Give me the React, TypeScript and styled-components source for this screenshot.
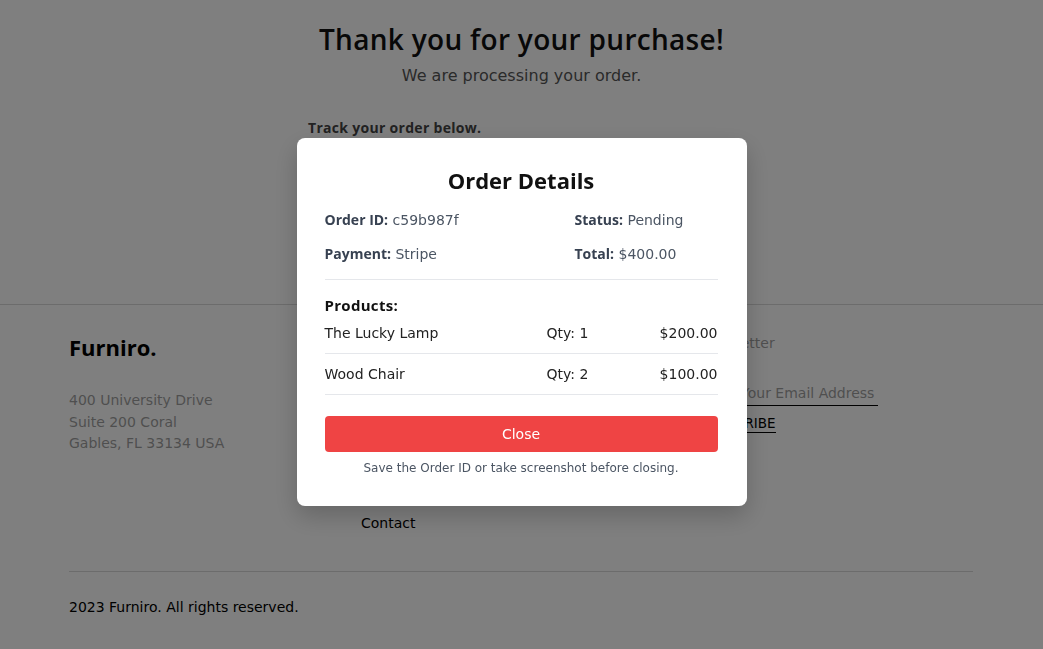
import React from "react";
import styled, { createGlobalStyle } from "styled-components";

const bodyFont = `"DejaVu Sans", "Open Sans", sans-serif`;
const headFont = `"Open Sans", "DejaVu Sans", sans-serif`;

const GlobalStyle = createGlobalStyle`
  * { box-sizing: border-box; }
  body {
    margin: 0;
    background: #ffffff;
    font-family: ${bodyFont};
    color: #000;
  }
`;

interface IProduct {
  name: string;
  qty: number;
  price: string;
}

const products: IProduct[] = [
  { name: "The Lucky Lamp", qty: 1, price: "$200.00" },
  { name: "Wood Chair", qty: 2, price: "$100.00" },
];

const footerLinks = ["Home", "Shop", "About", "Contact"];
const helpLinks = ["Payment Options", "Returns", "Privacy Policies"];

const App: React.FC = () => {
  return (
    <>
      <GlobalStyle />
      <STDPage>
        <STDMain>
          <STDTitle>Thank you for your purchase!</STDTitle>
          <STDSubtitle>We are processing your order.</STDSubtitle>
          <STDTrack>
            <STDTrackLabel>Track your order below.</STDTrackLabel>
            <STDTrackInput placeholder="Enter your Order ID" />
            <STDTrackButton>Track Order</STDTrackButton>
          </STDTrack>
        </STDMain>

        <STDFooter>
          <STDFooterTop>
            <STDBrandCol>
              <STDBrand>Furniro.</STDBrand>
              <STDAddress>
                400 University Drive
                <br />
                Suite 200 Coral
                <br />
                Gables, FL 33134 USA
              </STDAddress>
            </STDBrandCol>
            <STDLinkCol width={170}>
              <STDColTitle>Links</STDColTitle>
              {footerLinks.map((l) => (
                <STDFooterLink key={l}>{l}</STDFooterLink>
              ))}
            </STDLinkCol>
            <STDLinkCol width={168}>
              <STDColTitle>Help</STDColTitle>
              {helpLinks.map((l) => (
                <STDFooterLink key={l}>{l}</STDFooterLink>
              ))}
            </STDLinkCol>
            <STDNewsCol>
              <STDColTitle>Newsletter</STDColTitle>
              <STDEmail placeholder="Enter Your Email Address" />
              <STDSubscribe>SUBSCRIBE</STDSubscribe>
            </STDNewsCol>
          </STDFooterTop>
          <STDFooterBottom>2023 Furniro. All rights reserved.</STDFooterBottom>
        </STDFooter>
      </STDPage>

      <STDOverlay>
        <STDModal>
          <STDModalTitle>Order Details</STDModalTitle>
          <STDInfoGrid>
            <STDInfo>
              <b>Order ID:</b> c59b987f
            </STDInfo>
            <STDInfo>
              <b>Status:</b> Pending
            </STDInfo>
            <STDInfo>
              <b>Payment:</b> Stripe
            </STDInfo>
            <STDInfo>
              <b>Total:</b> $400.00
            </STDInfo>
          </STDInfoGrid>
          <STDProductsTitle>Products:</STDProductsTitle>
          {products.map((p) => (
            <STDProductRow key={p.name}>
              <span>{p.name}</span>
              <STDQty>Qty: {p.qty}</STDQty>
              <STDPrice>{p.price}</STDPrice>
            </STDProductRow>
          ))}
          <STDCloseButton>Close</STDCloseButton>
          <STDNote>Save the Order ID or take screenshot before closing.</STDNote>
        </STDModal>
      </STDOverlay>
    </>
  );
};

export default App;

const STDPage = styled.div`
  display: flex;
  flex-direction: column;
`;

const STDMain = styled.main`
  padding: 22px 0 70px;
  display: flex;
  flex-direction: column;
  align-items: center;
`;

const STDTitle = styled.h1`
  margin: 0;
  font-family: ${headFont};
  font-size: 28px;
  line-height: 34px;
  font-weight: 600;
  letter-spacing: 0.3px;
  color: #111;
`;

const STDSubtitle = styled.p`
  margin: 8px 0 0;
  font-size: 16px;
  line-height: 24px;
  color: #555;
`;

const STDTrack = styled.div`
  width: 427px;
  margin-top: 30px;
  display: flex;
  flex-direction: column;
  gap: 8px;
`;

const STDTrackLabel = styled.div`
  font-family: ${headFont};
  font-size: 14px;
  line-height: 20px;
  font-weight: 700;
  letter-spacing: 0.3px;
  color: #444;
`;

const STDTrackInput = styled.input`
  height: 40px;
  border: 1px solid #ccc;
  border-radius: 4px;
  padding: 0 12px;
  font: inherit;
`;

const STDTrackButton = styled.button`
  height: 40px;
  border: none;
  border-radius: 4px;
  background: #b88e2f;
  color: #fff;
  font: inherit;
`;

const STDFooter = styled.footer`
  border-top: 1px solid #d9d9d9;
  padding: 0 70px 0 69px;
`;

const STDFooterTop = styled.div`
  display: flex;
  padding: 28px 0 38px;
`;

const STDBrandCol = styled.div`
  width: 292px;
`;

const STDBrand = styled.div`
  font-family: ${headFont};
  font-size: 22px;
  line-height: 28px;
  font-weight: 700;
  color: #000;
`;

const STDAddress = styled.div`
  margin-top: 29px;
  font-size: 14px;
  line-height: 21.5px;
  color: #9f9f9f;
`;

const STDLinkCol = styled.div<{ width: number }>`
  width: ${({ width }) => width}px;
  display: flex;
  flex-direction: column;
  gap: 25px;
`;

const STDColTitle = styled.div`
  font-size: 14px;
  line-height: 20px;
  color: #9f9f9f;
`;

const STDFooterLink = styled.div`
  font-size: 14px;
  line-height: 20px;
  color: #000;
`;

const STDNewsCol = styled.div`
  display: flex;
  flex-direction: column;
  align-items: flex-start;
`;

const STDEmail = styled.input`
  margin-top: 30px;
  width: 179px;
  border: none;
  border-bottom: 1px solid #000;
  padding: 0 0 2px;
  font-family: ${bodyFont};
  font-size: 14px;
  line-height: 20px;
  outline: none;
  &::placeholder {
    color: #9f9f9f;
  }
`;

const STDSubscribe = styled.div`
  margin-top: 8px;
  font-size: 13.5px;
  line-height: 18px;
  color: #000;
  border-bottom: 1px solid #000;
`;

const STDFooterBottom = styled.div`
  border-top: 1px solid #d9d9d9;
  padding: 25px 0 32px;
  font-size: 14px;
  line-height: 20px;
  color: #000;
`;

const STDOverlay = styled.div`
  position: fixed;
  inset: 0;
  padding-bottom: 6px;
  background: rgba(0, 0, 0, 0.5);
  display: flex;
  align-items: center;
  justify-content: center;
`;

const STDModal = styled.div`
  width: 450px;
  background: #fff;
  border-radius: 8px;
  padding: 28px 29px 30px 28px;
  box-shadow: 0 10px 25px rgba(0, 0, 0, 0.2);
  display: flex;
  flex-direction: column;
`;

const STDModalTitle = styled.h2`
  margin: 0;
  text-align: center;
  font-family: ${headFont};
  font-size: 22px;
  line-height: 28px;
  font-weight: 700;
  color: #111;
`;

const STDInfoGrid = styled.div`
  display: grid;
  grid-template-columns: 250px 1fr;
  row-gap: 14px;
  margin-top: 16px;
  padding-bottom: 15px;
  border-bottom: 1px solid #e5e7eb;
`;

const STDInfo = styled.div`
  font-size: 14px;
  line-height: 20px;
  color: #4b5563;
  b {
    font-family: ${headFont};
    font-weight: 700;
    color: #374151;
  }
`;

const STDProductsTitle = styled.div`
  margin-top: 17px;
  font-family: ${headFont};
  font-size: 15px;
  line-height: 16px;
  font-weight: 700;
  letter-spacing: 0.3px;
  color: #111;
`;

const STDProductRow = styled.div`
  display: grid;
  grid-template-columns: 1fr 100px 100px;
  padding: 10px 0;
  border-bottom: 1px solid #e5e7eb;
  font-size: 14px;
  line-height: 20px;
  color: #222;
`;

const STDQty = styled.span`
  text-align: center;
`;

const STDPrice = styled.span`
  text-align: right;
`;

const STDCloseButton = styled.button`
  margin-top: 21px;
  height: 36px;
  border: none;
  border-radius: 4px;
  background: #ef4444;
  color: #fff;
  font-family: ${bodyFont};
  font-size: 14px;
  cursor: pointer;
`;

const STDNote = styled.div`
  margin-top: 8px;
  text-align: center;
  font-size: 12px;
  line-height: 16px;
  color: #4b5563;
`;
